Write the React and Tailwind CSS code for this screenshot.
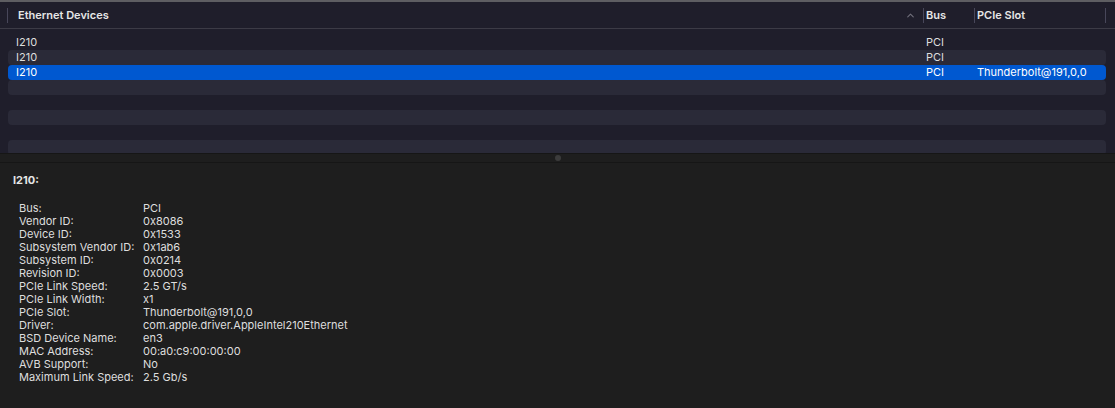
import { ChevronUp } from 'lucide-react';

const devices = [
  { name: 'I210', bus: 'PCI', slot: '' },
  { name: 'I210', bus: 'PCI', slot: '' },
  { name: 'I210', bus: 'PCI', slot: 'Thunderbolt@191,0,0', selected: true },
];

const details = [
  ['Bus:', 'PCI'],
  ['Vendor ID:', '0x8086'],
  ['Device ID:', '0x1533'],
  ['Subsystem Vendor ID:', '0x1ab6'],
  ['Subsystem ID:', '0x0214'],
  ['Revision ID:', '0x0003'],
  ['PCIe Link Speed:', '2.5 GT/s'],
  ['PCIe Link Width:', 'x1'],
  ['PCIe Slot:', 'Thunderbolt@191,0,0'],
  ['Driver:', 'com.apple.driver.AppleIntel210Ethernet'],
  ['BSD Device Name:', 'en3'],
  ['MAC Address:', '00:a0:c9:00:00:00'],
  ['AVB Support:', 'No'],
  ['Maximum Link Speed:', '2.5 Gb/s'],
];

export default function App() {
  const rows = [...devices, {}, {}, {}, {}, {}];

  return (
    <div className="w-[1115px] h-[408px] overflow-hidden bg-[#1e1e1e] text-[11px] text-[#dedede] flex flex-col" style={{ fontFamily: 'Inter, "Liberation Sans", sans-serif' }}>
      <div className="h-[2px] bg-[#5e5e62]" />

      {/* table */}
      <div className="h-[151px] bg-[#1f1e2b] flex flex-col overflow-hidden">
        <div className="h-[27px] flex items-center border-b border-[#3c3b46] shrink-0 pr-[9px]">
          <div className="w-px h-[15px] bg-[#48475a] ml-[7px]" />
          <div className="flex-1 pl-[10px] font-semibold text-[#e6e6e6]">Ethernet Devices</div>
          <ChevronUp size={11} strokeWidth={2.5} className="text-[#6f6e7a] mr-[7px]" />
          <div className="w-px h-[15px] bg-[#48475a]" />
          <div className="w-[50px] pl-[2px] font-semibold text-[#e6e6e6]">Bus</div>
          <div className="w-px h-[15px] bg-[#48475a]" />
          <div className="w-[130px] pl-[2px] font-semibold text-[#e6e6e6]">PCIe Slot</div>
          <div className="w-px h-[15px] bg-[#48475a]" />
        </div>
        <div className="pt-[6px] pl-[8px] pr-[9px] flex flex-col">
          {rows.map((r, i) => (
            <div
              key={i}
              className={`h-[15px] shrink-0 flex items-center rounded-[4px] ${r.selected ? 'bg-[#0058d0] text-white' : i % 2 === 1 ? 'bg-[#2a2a38]' : ''}`}
            >
              <div className="flex-1 pl-[8px]">{r.name}</div>
              <div className="w-[51px]">{r.bus}</div>
              <div className="w-[129px]">{r.slot}</div>
            </div>
          ))}
        </div>
      </div>

      {/* splitter */}
      <div className="h-[10px] border-t border-b border-[#161616] flex items-center justify-center shrink-0">
        <div className="w-[6px] h-[6px] rounded-full bg-[#3c3c3c]" />
      </div>

      {/* details */}
      <div className="flex-1 pl-[13px] pt-[10px]">
        <div className="font-bold text-[#e6e6e6] leading-[14px]">I210:</div>
        <div className="mt-[15px] pl-[6px]">
          {details.map(([k, v]) => (
            <div key={k} className="flex h-[13px] items-center">
              <div className="w-[124px]">{k}</div>
              <div>{v}</div>
            </div>
          ))}
        </div>
      </div>
    </div>
  );
}
